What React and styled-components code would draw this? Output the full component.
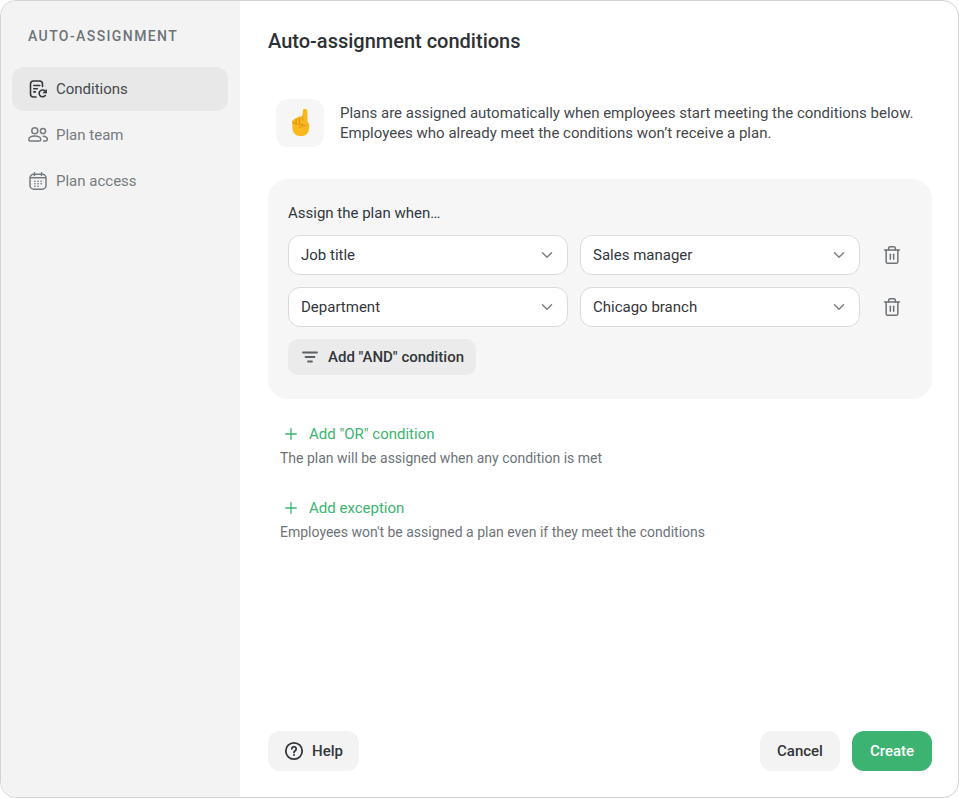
import React from 'react'
import styled, { createGlobalStyle } from 'styled-components'
import { ChevronDown, Plus, Trash2 } from 'lucide-react'

const GlobalStyle = createGlobalStyle`
  html, body {
    margin: 0;
    padding: 0;
    background: #fff;
    font-family: Roboto, "Liberation Sans", sans-serif;
  }
  * {
    box-sizing: border-box;
  }
`

const Modal = styled.div`
  display: flex;
  width: 959px;
  height: 798px;
  background: #fff;
  border: 1px solid #d2d3d4;
  border-radius: 16px;
  overflow: hidden;
`

const Sidebar = styled.aside`
  display: flex;
  flex-direction: column;
  flex: 0 0 239px;
  padding: 27px 11px 0;
  background: #f3f3f3;
`

const SidebarTitle = styled.div`
  height: 16px;
  margin: 0 0 23px 16px;
  color: #6e7378;
  font-size: 14px;
  line-height: 16px;
  font-weight: 500;
  letter-spacing: 1.4px;
`

const NavList = styled.nav`
  display: flex;
  flex-direction: column;
  gap: 2px;
`

const NavItem = styled.div`
  display: flex;
  align-items: center;
  gap: 8px;
  width: 216px;
  height: 44px;
  padding: 0 16px;
  border-radius: 12px;
  background: ${(props) => (props.active ? '#e8e8e8' : 'transparent')};
  color: ${(props) => (props.active ? '#44484d' : '#767b80')};
  font-size: 15px;
`

const Main = styled.main`
  display: flex;
  flex-direction: column;
  flex: 1;
  padding: 28px 26px 26px 28px;
`

const Title = styled.h1`
  margin: 0 0 46px;
  color: #2e3135;
  font-size: 20px;
  line-height: 24px;
  font-weight: 500;
`

const Notice = styled.div`
  display: flex;
  align-items: center;
  gap: 16px;
  margin: 0 0 32px 8px;
`

const EmojiBox = styled.div`
  display: flex;
  align-items: center;
  justify-content: center;
  width: 48px;
  height: 48px;
  border-radius: 12px;
  background: #f6f6f6;
`

const NoticeText = styled.p`
  margin: 0;
  color: #44484d;
  font-size: 15px;
  line-height: 20px;
`

const ConditionCard = styled.section`
  display: flex;
  flex-direction: column;
  align-items: flex-start;
  height: 220px;
  padding: 24px 20px;
  border-radius: 20px;
  background: #f6f6f6;
`

const CardLabel = styled.div`
  height: 20px;
  margin-bottom: 12px;
  color: #33363a;
  font-size: 15px;
  line-height: 20px;
`

const ConditionRow = styled.div`
  display: flex;
  align-items: center;
  gap: 12px;
  margin-bottom: 12px;
`

const Select = styled.div`
  display: flex;
  align-items: center;
  justify-content: space-between;
  width: 280px;
  height: 40px;
  padding: 0 11px 0 12px;
  border: 1px solid #d9dadb;
  border-radius: 12px;
  background: #fff;
  color: #33363a;
  font-size: 15px;
`

const IconButton = styled.div`
  display: flex;
  align-items: center;
  justify-content: center;
  width: 40px;
  height: 40px;
  color: #6e7378;
`

const AndButton = styled.div`
  display: flex;
  align-items: center;
  gap: 8px;
  height: 36px;
  padding: 0 12px;
  border-radius: 10px;
  background: #ebebeb;
  color: #33363a;
  font-size: 15px;
  font-weight: 500;
`

const ExtraBlock = styled.div`
  margin: ${(props) => (props.first ? '24px' : '29px')} 0 0 12px;
`

const AddLink = styled.div`
  display: flex;
  align-items: center;
  gap: 9px;
  height: 22px;
  padding-left: 2px;
  color: #3cb371;
  font-size: 15px;
`

const Hint = styled.div`
  margin-top: 3px;
  color: #6e7378;
  font-size: 14px;
  line-height: 20px;
`

const Footer = styled.footer`
  display: flex;
  align-items: center;
  justify-content: space-between;
  margin-top: auto;
`

const FooterActions = styled.div`
  display: flex;
  gap: 12px;
`

const Button = styled.div`
  display: flex;
  align-items: center;
  justify-content: center;
  gap: 8px;
  width: ${(props) => props.width}px;
  height: 40px;
  border-radius: 12px;
  background: ${(props) => (props.primary ? '#3cb371' : '#f3f3f3')};
  color: ${(props) => (props.primary ? '#fff' : '#33363a')};
  font-size: 15px;
  font-weight: 500;
`

function ConditionsIcon() {
  return (
    <svg width="20" height="20" viewBox="0 0 20 20" fill="none" stroke="#33363a" strokeWidth="1.6" strokeLinecap="round" strokeLinejoin="round">
      <path d="M8 18H5.500a3 3 0 0 1-3-3V5a3 3 0 0 1 3-3h6a3 3 0 0 1 3 3v2.500" />
      <path d="M5.800 6.500h6M5.800 9.700h3.500M5.800 12.900h1.500" />
      <path d="M17.800 13.500a3.400 3.400 0 1 0-.6 3" />
      <path d="M18.200 11v2.700h-2.700" strokeWidth="1.300" />
    </svg>
  )
}

function TeamIcon() {
  return (
    <svg width="20" height="20" viewBox="0 0 20 20" fill="none" stroke="currentColor" strokeWidth="1.500" strokeLinecap="round" strokeLinejoin="round">
      <circle cx="6.800" cy="5.800" r="3" />
      <path d="M.8 14.400c0-2 2.700-3.400 6-3.400s6 1.400 6 3.400c0 1-.7 1.600-1.700 1.600H2.500c-1 0-1.700-.6-1.700-1.600Z" />
      <circle cx="15" cy="6" r="2.600" />
      <path d="M15.200 11.200c2.200.1 4.100 1.300 4.100 3.100 0 1.100-.7 1.700-1.700 1.700h-2" />
    </svg>
  )
}

function CalendarIcon() {
  return (
    <svg width="20" height="20" viewBox="0 0 20 20" fill="none" stroke="currentColor" strokeWidth="1.500" strokeLinecap="round">
      <rect x="2" y="3.200" width="16" height="15" rx="3.800" />
      <path d="M6.500 1.800v2.800M13.500 1.800v2.800M2.500 6.800h15" />
      <path d="M6.800 10.200h.2M9.900 10.200h.2M13 10.200h.2M6.800 12.800h.2M9.900 12.800h.2M13 12.800h.2M6.800 15.300h.2M9.900 15.300h.2" strokeWidth="1.600" />
    </svg>
  )
}

function PointingHand() {
  return (
    <svg width="24" height="30" viewBox="0 0 24 30">
      <path d="M14.800 3c0-1.300 1-2.200 2.200-2.200s2.300.9 2.300 2.200l.3 11c1.300.8 1.800 2 1.700 3.600l-.3 3.600c-.4 4-3.500 6.800-7.500 6.800h-1.600c-4 0-6.900-2.800-7.300-6.700l-.5-6.700c-.1-1.500.5-2.500 1.700-3.200l4-2.400c1.400-.8 3-1 4.600-.8L14.800 3Z" fill="#fab81f" />
      <path d="M14.700 7.800c.2 1.600.2 3.400.2 5.200" fill="none" stroke="#e8920f" strokeWidth="0.900" />
      <path d="M4.800 13.800c.3 2 2 2.600 3.300 1.500M8.100 11.200v4.100c.5 1.500 2.400 1.800 3.300.5M11.400 10.200v5.600c.6 1.200 2.500 1.400 3.500.1M11.400 19.500c1.800-1.800 4.700-2.500 6.700-1.900" fill="none" stroke="#d9860c" strokeWidth="0.900" strokeLinecap="round" />
    </svg>
  )
}

function FilterIcon() {
  return (
    <svg width="20" height="20" viewBox="0 0 20 20" fill="none" stroke="#5c6065" strokeWidth="1.800" strokeLinecap="round">
      <path d="M3 5.500h14M5.500 10h9M8 14.500h4" />
    </svg>
  )
}

function HelpIcon() {
  return (
    <svg width="20" height="20" viewBox="0 0 20 20" fill="none" stroke="#33363a" strokeWidth="1.800" strokeLinecap="round" strokeLinejoin="round">
      <circle cx="10" cy="10" r="8.200" />
      <path d="M7.800 7.800a2.200 2.200 0 1 1 3.400 1.900c-.8.500-1.200.9-1.200 1.700" />
      <path d="M10 14h.01" strokeWidth="2" />
    </svg>
  )
}

const rows = [
  ['Job title', 'Sales manager'],
  ['Department', 'Chicago branch'],
]

export default function App() {
  return (
    <>
      <GlobalStyle />
      <Modal>
        <Sidebar>
          <SidebarTitle>AUTO-ASSIGNMENT</SidebarTitle>
          <NavList>
            <NavItem active>
              <ConditionsIcon />
              Conditions
            </NavItem>
            <NavItem>
              <TeamIcon />
              Plan team
            </NavItem>
            <NavItem>
              <CalendarIcon />
              Plan access
            </NavItem>
          </NavList>
        </Sidebar>
        <Main>
          <Title>Auto-assignment conditions</Title>
          <Notice>
            <EmojiBox>
              <PointingHand />
            </EmojiBox>
            <NoticeText>
              Plans are assigned automatically when employees start meeting the conditions below.
              <br />
              Employees who already meet the conditions won’t receive a plan.
            </NoticeText>
          </Notice>
          <ConditionCard>
            <CardLabel>Assign the plan when…</CardLabel>
            {rows.map(([field, value]) => (
              <ConditionRow key={field}>
                <Select>
                  {field}
                  <ChevronDown size={18} color="#7d8186" strokeWidth={2} />
                </Select>
                <Select>
                  {value}
                  <ChevronDown size={18} color="#7d8186" strokeWidth={2} />
                </Select>
                <IconButton>
                  <Trash2 size={20} strokeWidth={1.8} />
                </IconButton>
              </ConditionRow>
            ))}
            <AndButton>
              <FilterIcon />
              Add "AND" condition
            </AndButton>
          </ConditionCard>
          <ExtraBlock first>
            <AddLink>
              <Plus size={18} strokeWidth={1.75} />
              Add "OR" condition
            </AddLink>
            <Hint>The plan will be assigned when any condition is met</Hint>
          </ExtraBlock>
          <ExtraBlock>
            <AddLink>
              <Plus size={18} strokeWidth={1.75} />
              Add exception
            </AddLink>
            <Hint>Employees won't be assigned a plan even if they meet the conditions</Hint>
          </ExtraBlock>
          <Footer>
            <Button width={91}>
              <HelpIcon />
              Help
            </Button>
            <FooterActions>
              <Button width={80}>Cancel</Button>
              <Button width={80} primary>Create</Button>
            </FooterActions>
          </Footer>
        </Main>
      </Modal>
    </>
  )
}
